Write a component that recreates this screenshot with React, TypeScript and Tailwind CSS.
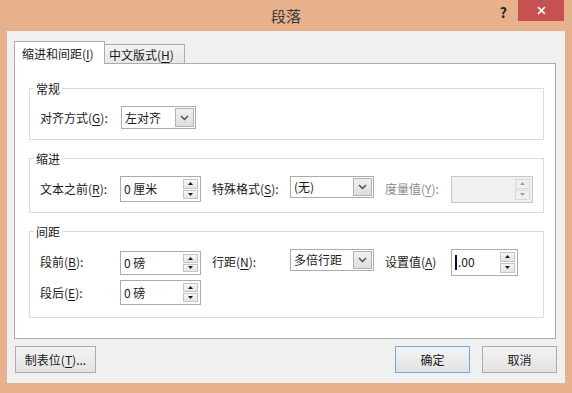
import { ReactNode } from "react";

type Children = { children: ReactNode };

const Key = ({ children }: Children) => (
  <span className="underline underline-offset-[2px]">{children}</span>
);

const Arrow = ({ up, disabled }: { up?: boolean; disabled?: boolean }) => (
  <svg width="5" height="3" viewBox="0 0 5 3">
    <path
      d={up ? "M0 3 L2.5 0 L5 3 Z" : "M0 0 L2.5 3 L5 0 Z"}
      fill={disabled ? "#a0a0a0" : "#1a1a1a"}
    />
  </svg>
);

const Chevron = () => (
  <svg width="9" height="6" viewBox="0 0 9 6">
    <polyline points="1,1 4.5,4.5 8,1" fill="none" stroke="#4a4a4a" strokeWidth="1.4" />
  </svg>
);

type SpinBoxProps = {
  className: string;
  value?: ReactNode;
  disabled?: boolean;
};

const SpinBox = ({ className, value, disabled }: SpinBoxProps) => (
  <div
    className={`flex border ${
      disabled ? "border-[#c8c8c8] bg-[#f0f0f0]" : "border-[#acacac] bg-white"
    } ${className}`}
  >
    <div className="flex flex-1 items-center pl-[3px]">{value}</div>
    <div className="flex flex-col gap-px py-[2px] pr-[2px]">
      <div
        className={`flex w-[15px] flex-1 items-center justify-center border ${
          disabled
            ? "border-[#d9d9d9] bg-[#f0f0f0]"
            : "border-[#c4c4c4] bg-gradient-to-b from-[#f6f6f6] to-[#e4e4e4]"
        }`}
      >
        <Arrow up disabled={disabled} />
      </div>
      <div
        className={`flex w-[15px] flex-1 items-center justify-center border ${
          disabled
            ? "border-[#d9d9d9] bg-[#f0f0f0]"
            : "border-[#c4c4c4] bg-gradient-to-b from-[#f6f6f6] to-[#e4e4e4]"
        }`}
      >
        <Arrow disabled={disabled} />
      </div>
    </div>
  </div>
);

const Combo = ({ className, value }: { className: string; value: string }) => (
  <div className={`flex border border-[#acacac] bg-white ${className}`}>
    <div className="flex flex-1 items-center pl-[3px]">{value}</div>
    <div className="my-px mr-px flex w-[19px] items-center justify-center border border-[#b3b3b3] bg-gradient-to-b from-[#efefef] to-[#dedede]">
      <Chevron />
    </div>
  </div>
);

const Group = ({ title, className, children }: Children & { title: string; className: string }) => (
  <div className={`relative w-[515px] border border-[#dcdcdc] pl-[10px] pt-[17px] ${className}`}>
    <span className="absolute -top-[8px] left-[4px] bg-white px-[2px]">{title}</span>
    {children}
  </div>
);

const DialogButton = ({ children, className }: Children & { className: string }) => (
  <button
    className={`flex h-[27px] items-center justify-center border bg-gradient-to-b from-[#f3f3f3] to-[#e3e3e3] ${className}`}
  >
    {children}
  </button>
);

export default function App() {
  return (
    <div className="flex h-[393px] w-[572px] flex-col bg-[#e6b18b] font-['Noto_Sans_CJK_SC','Microsoft_YaHei',sans-serif] text-[12px] leading-[16px] text-[#1a1a1a]">
      {/* title bar */}
      <div className="grid h-[31px] grid-cols-[1fr_auto_1fr]">
        <div />
        <div className="pt-[6px] text-[15px] leading-[20px] text-[#3a3a3a]">段落</div>
        <div className="flex items-start justify-end pr-[8px]">
          <span className="mr-[11px] mt-[4px] text-[14px] font-bold leading-[16px] text-[#222]">?</span>
          <div className="flex h-[21px] w-[46px] items-center justify-center bg-[#c75050]">
            <svg width="9" height="9" viewBox="0 0 9 9">
              <path d="M1 1 L8 8 M8 1 L1 8" stroke="#fff" strokeWidth="1.7" />
            </svg>
          </div>
        </div>
      </div>

      {/* client area */}
      <div className="mx-[7px] h-[352px] bg-[#f0f0f0] px-[7px] pt-[10px]">
        <div className="flex h-[22px] items-end">
          <div className="relative z-10 -mb-px h-[23px] w-[91px] border border-b-0 border-[#acacac] bg-white pl-[7px] pt-[4px]">
            缩进和间距(<Key>I</Key>)
          </div>
          <div className="h-[19px] w-[80px] border border-b-0 border-l-0 border-[#acacac] bg-gradient-to-b from-[#f4f4f4] to-[#e7e7e7] pl-[4px] pt-[2px]">
            中文版式(<Key>H</Key>)
          </div>
        </div>

        <div className="h-[276px] w-[542px] border border-[#acacac] bg-white pl-[14px] pt-[24px]">
          <Group title="常规" className="pb-[10px]">
            <div className="flex h-[23px] items-center">
              <span className="w-[81px]">
                对齐方式(<Key>G</Key>):
              </span>
              <Combo className="h-[23px] w-[75px]" value="左对齐" />
            </div>
          </Group>

          <Group title="缩进" className="mt-[18px] pb-[10px]">
            <div className="flex h-[26px] items-center">
              <span className="w-[80px]">
                文本之前(<Key>R</Key>):
              </span>
              <SpinBox className="h-[26px] w-[81px]" value="0 厘米" />
              <span className="ml-[11px] w-[78px]">
                特殊格式(<Key>S</Key>):
              </span>
              <Combo className="h-[22px] w-[84px] self-start" value="(无)" />
              <span className="ml-[11px] w-[66px] text-[#8c8c8c]">
                度量值(<Key>Y</Key>):
              </span>
              <SpinBox className="h-[27px] w-[82px]" disabled />
            </div>
          </Group>

          <Group title="间距" className="mt-[18px] pb-[11px]">
            <div className="flex flex-col gap-[5px]">
              <div className="flex h-[26px] items-center">
                <span className="w-[80px]">
                  段前(<Key>B</Key>):
                </span>
                <SpinBox className="h-[24px] w-[81px] self-end" value="0 磅" />
                <span className="ml-[11px] w-[78px]">
                  行距(<Key>N</Key>):
                </span>
                <Combo className="h-[22px] w-[84px] self-start" value="多倍行距" />
                <span className="ml-[11px] w-[66px]">
                  设置值(<Key>A</Key>)
                </span>
                <SpinBox
                  className="h-[27px] w-[67px]"
                  value={
                    <>
                      <span className="mr-px inline-block h-[15px] w-[2px] bg-[#0a0a40]" />
                      .00
                    </>
                  }
                />
              </div>
              <div className="flex h-[26px] items-center">
                <span className="w-[80px]">
                  段后(<Key>E</Key>):
                </span>
                <SpinBox className="h-[25px] w-[81px] self-start" value="0 磅" />
              </div>
            </div>
          </Group>
        </div>

        <div className="mt-[7px] flex pl-px pr-px">
          <DialogButton className="w-[81px] border-[#acacac]">
            制表位(<Key>T</Key>)...
          </DialogButton>
          <DialogButton className="ml-auto w-[75px] border-[#6ea9e6]">确定</DialogButton>
          <DialogButton className="ml-[12px] w-[75px] border-[#acacac]">取消</DialogButton>
        </div>
      </div>
    </div>
  );
}
